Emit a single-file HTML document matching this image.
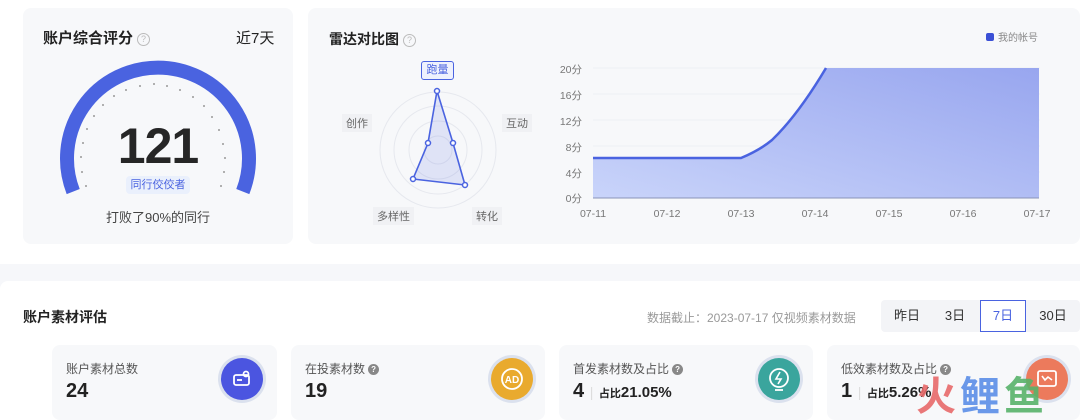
<!DOCTYPE html>
<html><head><meta charset="utf-8"><style>
*{margin:0;padding:0;box-sizing:border-box}
body{width:1080px;height:420px;overflow:hidden;background:#f6f7fa;font-family:"Liberation Sans","Noto Sans CJK SC",sans-serif;color:#222;position:relative}
.abs{position:absolute}
.top{left:0;top:0;width:1080px;height:264px;background:#fff}
.card{background:#f7f8fa;border-radius:8px}
.bot{left:0;top:281px;width:1080px;height:139px;background:#fff;border-radius:8px 0 0 0}
.q{display:inline-block;width:13px;height:13px;border:1px solid #bbb;border-radius:50%;font-size:9px;color:#bbb;text-align:center;line-height:11px;vertical-align:middle;margin-left:4px;font-weight:normal}
.sc{top:345px;height:75px;background:#f7f8fa;border-radius:8px}
.lbl{font-size:12px;color:#555;position:absolute;left:14px;top:15px}
.num{font-size:20px;font-weight:bold;position:absolute;left:14px;top:35px;color:#222}
.ic{position:absolute;top:13px;width:42px;height:42px;border-radius:50%;box-shadow:0 0 0 3px rgba(200,210,230,.6)}
.qd{display:inline-block;width:11px;height:11px;border-radius:50%;background:#888;color:#fff;font-size:8px;text-align:center;line-height:11px;vertical-align:middle;margin-left:3px;font-weight:bold}
.tab{top:301px;height:30px;font-size:13px;line-height:30px;text-align:center;color:#333}
</style></head><body>
<div class="abs top"></div>
<div class="abs card" style="left:23px;top:8px;width:270px;height:236px"></div>
<div class="abs card" style="left:308px;top:8px;width:772px;height:236px"></div>
<div class="abs" style="left:43px;top:27px;font-size:15px;font-weight:bold;color:#222">账户综合评分<span class="q">?</span></div>
<div class="abs" style="left:236px;top:27px;font-size:15px;color:#222">近7天</div>
<svg class="abs" style="left:0;top:0" width="300" height="250">
<path d="M73.2 191.6 A91 91 0 1 1 242.8 191.6" fill="none" stroke="#4a63e0" stroke-width="14"/>
<g fill="#999">
<circle cx="86" cy="186" r="1"/><circle cx="82" cy="172" r="1"/><circle cx="81" cy="157" r="1"/><circle cx="83" cy="143" r="1"/><circle cx="87" cy="129" r="1"/><circle cx="94" cy="116" r="1"/><circle cx="103" cy="105" r="1"/><circle cx="114" cy="96" r="1"/><circle cx="126" cy="90" r="1"/><circle cx="140" cy="86" r="1"/><circle cx="154" cy="84" r="1"/><circle cx="167" cy="86" r="1"/><circle cx="180" cy="90" r="1"/><circle cx="193" cy="97" r="1"/><circle cx="204" cy="106" r="1"/><circle cx="212" cy="117" r="1"/><circle cx="219" cy="130" r="1"/><circle cx="223" cy="144" r="1"/><circle cx="225" cy="158" r="1"/><circle cx="224" cy="172" r="1"/><circle cx="221" cy="186" r="1"/></g>
</svg>
<div class="abs" style="left:98px;top:117px;width:120px;text-align:center;font-size:50px;font-weight:bold;color:#262626;letter-spacing:-1px">121</div>
<div class="abs" style="left:126px;top:176px;width:64px;height:18px;background:#eaf0fc;border-radius:4px;font-size:11px;color:#4a63e0;text-align:center;line-height:18px">同行佼佼者</div>
<div class="abs" style="left:98px;top:207px;width:120px;text-align:center;font-size:13px;color:#444">打败了90%的同行</div>

<div class="abs" style="left:329px;top:29px;font-size:14px;font-weight:bold;color:#222">雷达对比图<span class="q">?</span></div>
<svg class="abs" style="left:330px;top:55px" width="220" height="180">
<g fill="none" stroke="#e6e8ee"><circle cx="108" cy="95" r="58"/><circle cx="108" cy="95" r="44"/><circle cx="108" cy="95" r="29"/><circle cx="108" cy="95" r="14"/></g>
<path d="M107 36 L123 88 L135 130 L83 124 L98 88 Z" fill="rgba(90,110,225,.15)" stroke="#4a63e0" stroke-width="1.6"/>
<g fill="#fff" stroke="#4a63e0" stroke-width="1.5"><circle cx="107" cy="36" r="2.5"/><circle cx="123" cy="88" r="2.5"/><circle cx="135" cy="130" r="2.5"/><circle cx="83" cy="124" r="2.5"/><circle cx="98" cy="88" r="2.5"/></g>
</svg>
<div class="abs" style="left:421px;top:61px;width:33px;height:19px;border:1px solid #4a63e0;border-radius:3px;background:#eef1fd;font-size:11px;color:#4a63e0;text-align:center;line-height:17px">跑量</div>
<div class="abs" style="left:342px;top:114px;font-size:11px;color:#666;background:#f0f1f4;padding:1px 4px">创作</div>
<div class="abs" style="left:502px;top:114px;font-size:11px;color:#666;background:#f0f1f4;padding:1px 4px">互动</div>
<div class="abs" style="left:373px;top:207px;font-size:11px;color:#666;background:#f0f1f4;padding:1px 4px">多样性</div>
<div class="abs" style="left:472px;top:207px;font-size:11px;color:#666;background:#f0f1f4;padding:1px 4px">转化</div>

<div class="abs" style="left:986px;top:29px;font-size:10px;color:#888"><span style="display:inline-block;width:8px;height:8px;background:#3b50d6;border-radius:2px;margin-right:4px"></span>我的帐号</div>
<svg class="abs" style="left:540px;top:0" width="540" height="250">
<defs><linearGradient id="g" x1="0" y1="1" x2="1" y2="0"><stop offset="0" stop-color="#c9d4fa"/><stop offset="1" stop-color="#98a6ef"/></linearGradient></defs>
<g stroke="#eef0f4"><line x1="53" y1="68" x2="500" y2="68"/><line x1="53" y1="94" x2="500" y2="94"/><line x1="53" y1="120" x2="500" y2="120"/><line x1="53" y1="146" x2="500" y2="146"/><line x1="53" y1="172" x2="500" y2="172"/></g>
<path d="M53 158 L201 158 Q220 150 232 140 Q258 115 286 68 L499 68 L499 198 L53 198Z" fill="url(#g)"/>
<path d="M53 158 L201 158 Q220 150 232 140 Q258 115 286 68" fill="none" stroke="#4a63e0" stroke-width="2.5"/>
<line x1="53" y1="198" x2="499" y2="198" stroke="#8a93b8" stroke-width="1"/>
<g font-size="10.5" fill="#777" text-anchor="end" font-family="Liberation Sans,Noto Sans CJK SC,sans-serif"><text x="42" y="73">20分</text><text x="42" y="99">16分</text><text x="42" y="125">12分</text><text x="42" y="151">8分</text><text x="42" y="177">4分</text><text x="42" y="202">0分</text></g>
<g font-size="10.5" fill="#777" text-anchor="middle" font-family="Liberation Sans,sans-serif"><text x="53" y="217">07-11</text><text x="127" y="217">07-12</text><text x="201" y="217">07-13</text><text x="275" y="217">07-14</text><text x="349" y="217">07-15</text><text x="423" y="217">07-16</text><text x="497" y="217">07-17</text></g>
</svg>

<div class="abs bot"></div>
<div class="abs" style="left:23px;top:307px;font-size:14px;font-weight:bold;color:#222">账户素材评估</div>
<div class="abs" style="left:647px;top:309px;font-size:12px;color:#999">数据截止：2023-07-17 仅视频素材数据</div>
<div class="abs" style="left:881px;top:300px;width:199px;height:32px;background:#f3f4f7;border-radius:4px"></div>
<div class="abs tab" style="left:884px;width:46px">昨日</div>
<div class="abs tab" style="left:932px;width:46px">3日</div>
<div class="abs tab" style="left:980px;top:300px;width:46px;height:32px;background:#fff;border:1px solid #4a63e0;color:#4a63e0">7日</div>
<div class="abs tab" style="left:1028px;width:50px">30日</div>

<div class="abs sc" style="left:52px;width:225px"><div class="lbl">账户素材总数</div><div class="num">24</div><div class="ic" style="left:169px;background:#4b55e0"></div></div>
<div class="abs sc" style="left:291px;width:254px"><div class="lbl">在投素材数<span class="qd">?</span></div><div class="num">19</div><div class="ic" style="left:200px;background:#e9aa2e"></div></div>
<div class="abs sc" style="left:559px;width:254px"><div class="lbl">首发素材数及占比<span class="qd">?</span></div><div class="num">4 <span style="color:#ddd;font-weight:normal;font-size:14px">|</span> <span style="font-size:11px">占比</span><span style="font-size:15px">21.05%</span></div><div class="ic" style="left:199px;background:#3aa59d"></div></div>
<div class="abs sc" style="left:827px;width:253px"><div class="lbl">低效素材数及占比<span class="qd">?</span></div><div class="num">1 <span style="color:#ddd;font-weight:normal;font-size:14px">|</span> <span style="font-size:11px">占比</span><span style="font-size:15px">5.26%</span></div><div class="ic" style="left:199px;background:#ec7a5c"></div></div>
<svg class="abs" style="left:221px;top:358px" width="42" height="42"><g fill="none" stroke="#fff" stroke-width="1.8"><rect x="13" y="17" width="15" height="10" rx="2"/><circle cx="25" cy="16" r="2.5"/><line x1="16" y1="22" x2="21" y2="22"/></g></svg>
<svg class="abs" style="left:491px;top:358px" width="42" height="42"><circle cx="21" cy="21" r="10" fill="none" stroke="#fff" stroke-width="1.8"/><text x="21" y="25" font-size="10" font-weight="bold" fill="#fff" text-anchor="middle" font-family="Liberation Sans,sans-serif">AD</text></svg>
<svg class="abs" style="left:758px;top:358px" width="42" height="42"><circle cx="21" cy="20" r="9" fill="none" stroke="#fff" stroke-width="1.8"/><path d="M22 14 L18 21 H23 L20 26" fill="none" stroke="#fff" stroke-width="1.6"/><line x1="17" y1="32" x2="25" y2="32" stroke="#fff" stroke-width="1.8"/></svg>
<svg class="abs" style="left:1026px;top:358px" width="42" height="42"><rect x="12" y="13" width="18" height="15" rx="2" fill="none" stroke="#fff" stroke-width="1.8"/><path d="M16 18 L19 22 L22 19 L26 22" fill="none" stroke="#fff" stroke-width="1.6"/></svg>
<div class="abs" style="left:916px;top:374px;font-size:40px;font-weight:bold;line-height:46px;letter-spacing:4px;opacity:.9"><span style="color:#e86a6a">火</span><span style="color:#5b8ee8">鲤</span><span style="color:#58b36a">鱼</span></div>
</body></html>
